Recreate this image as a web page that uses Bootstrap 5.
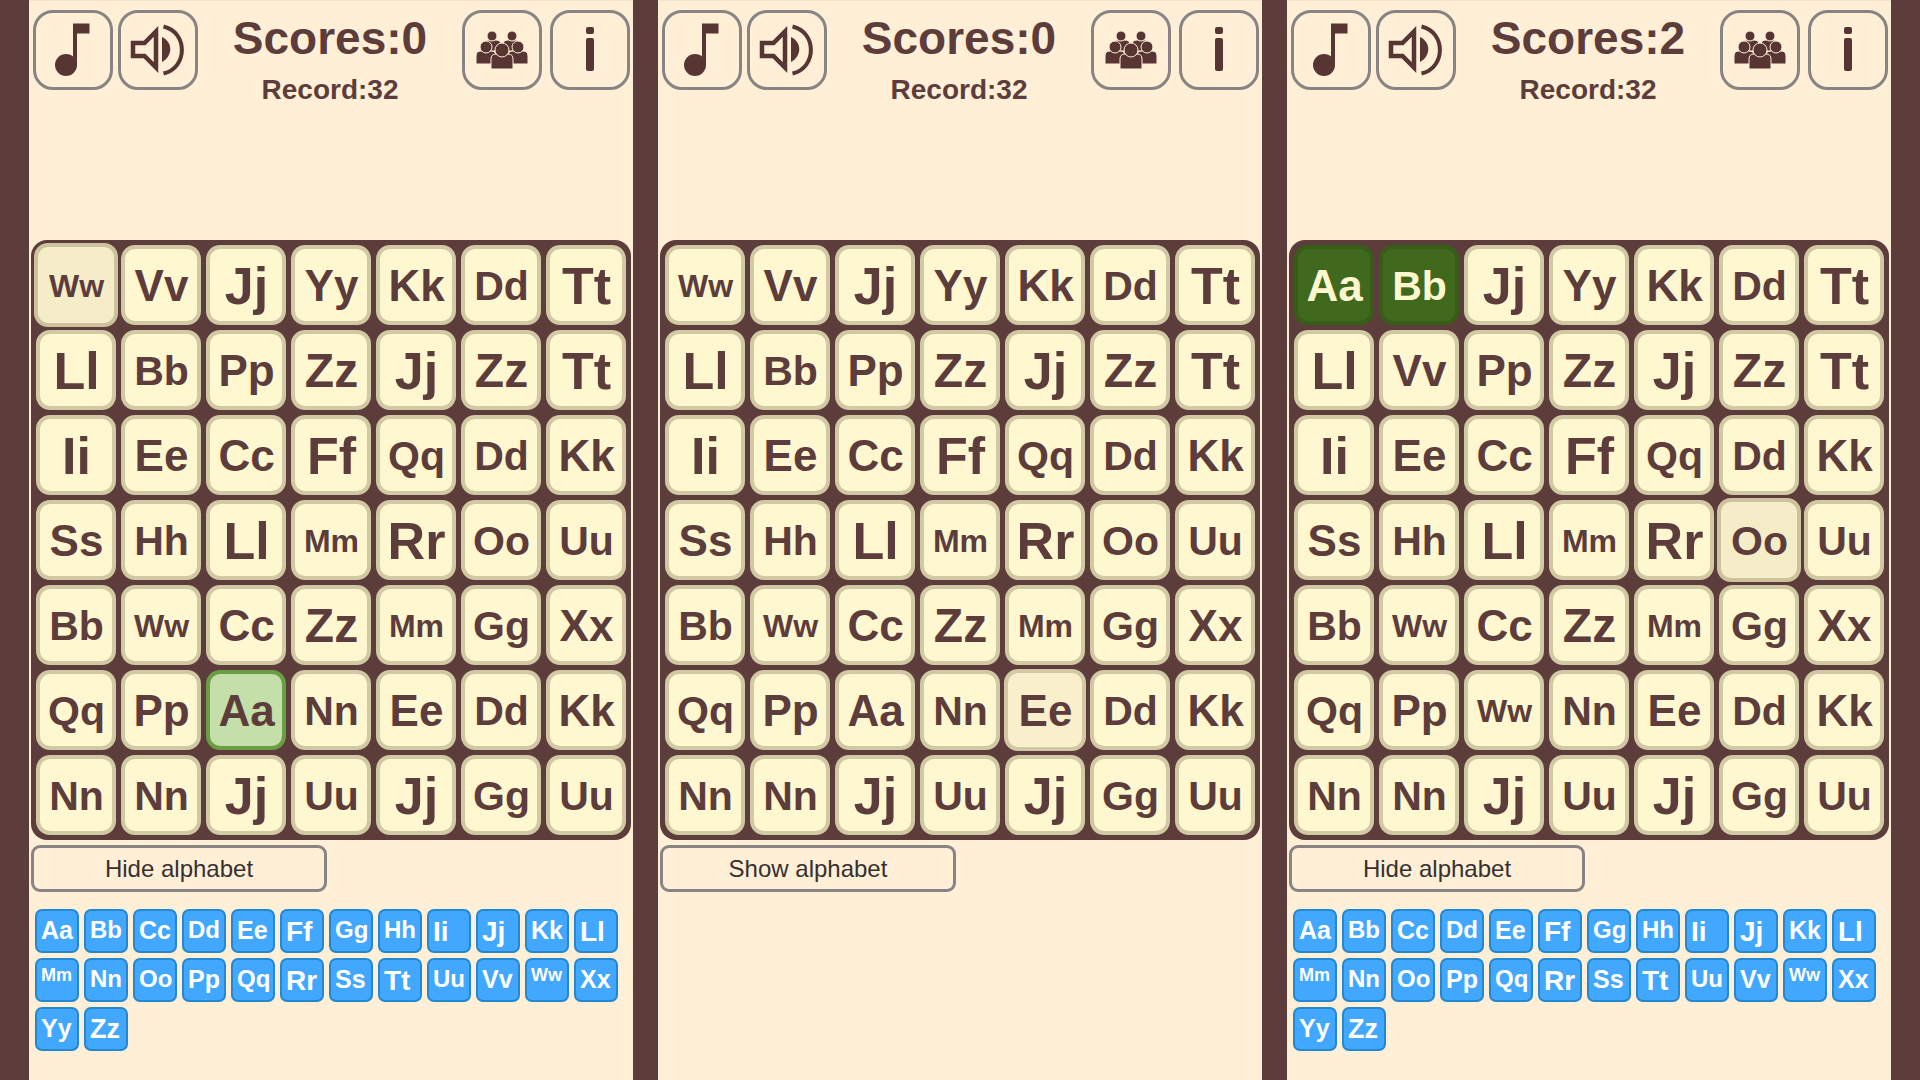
<!DOCTYPE html>
<html lang="en">
<head>
<meta charset="utf-8">
<meta name="viewport" content="width=device-width, initial-scale=1">
<title>Alphabet puzzle</title>
<link href="https://cdn.jsdelivr.net/npm/bootstrap@5.3.0/dist/css/bootstrap.min.css" rel="stylesheet">
<style>
body { background: #5d3d3b; color: #5d3d3b; font-family: "Liberation Sans", Arial, sans-serif; }
.games { padding: 0 29px; gap: 25px; }
.game { background: #ffefd6; border-top: 1px solid #f5e3cd; flex: 1 1 0; min-width: 0; }
.game-top { padding: 9px 3px 0 4px; height: 239px; }
.tool-group { gap: 5px; }
.tool-group-end { gap: 8px; }
.tool { width: 80px; height: 80px; border: 3px solid #888483; border-radius: 20px; background: transparent; color: #563532; padding: 0; }
.tool svg { display: block; width: 74px; height: 74px; }
.score-now { font-size: 46px; line-height: 56px; font-weight: 700; }
.score-best { font-size: 28px; line-height: 48px; font-weight: 700; }
.play-area { padding: 0 2px; }
.board { display: grid; grid-template-columns: repeat(7, minmax(0, 1fr)); grid-auto-rows: 80px; gap: 5px; padding: 5px; background: #5d3d3b; border-radius: 16px; }
.tile { border: 4px solid #d1c9a3; border-radius: 14px; background: #fef7d0; color: #5d3d3b; font-weight: 700; padding: 2px 0 0 1px; line-height: 1; white-space: nowrap; font-size: 44px; }
.tile.hovered { background: #f5ecc8; border-color: #ccc39c; margin: -2px; }
.tile.hovered-soft { background: #f9efcb; margin: -1px; }
.tile.picked { background: #c4dfa9; border-color: #6a9e43; }
.tile.solved { background: #40691d; border-color: #375d19; color: #fdf8d0; }
.tile.fit-xl { font-size: 52px; }
.tile.fit-l { font-size: 48px; }
.tile.fit-s { font-size: 41px; }
.tile.fit-xs { font-size: 32px; }
.alpha-toggle { width: 296px; height: 47px; margin-top: 5px; border: 3px solid #888483; border-radius: 9px; background: transparent; color: #353130; font-size: 24px; line-height: 1; padding: 0; }
.alpha { display: grid; grid-template-columns: repeat(12, 44px); grid-auto-rows: 44px; gap: 5px; margin: 17px 0 0 4px; padding: 0; list-style: none; }
.alpha li { border: 2px solid #2288cf; border-radius: 7px; background: #41a7ff; color: #fff; font-weight: 700; font-size: 25px; line-height: normal; padding: 5px 0 0 4px; white-space: nowrap; }
.alpha .fit-xl { font-size: 28px; }
.alpha .fit-l { font-size: 27px; }
.alpha .fit-s { font-size: 24px; }
.alpha .fit-xs { font-size: 18px; }
</style>
<script src="https://cdn.jsdelivr.net/npm/bootstrap@5.3.0/dist/js/bootstrap.bundle.min.js"></script>
</head>
<body>

<template id="game-template">
  <header class="game-top d-flex align-items-start">
    <div class="tool-group d-flex">
      <button type="button" class="tool" aria-label="Music">
        <svg viewBox="0 0 74 74" fill="currentColor" aria-hidden="true"><circle cx="30" cy="52" r="11"/><path d="M37 10.500H53.500V20.500H41V52H37Z"/></svg>
      </button>
      <button type="button" class="tool" aria-label="Sound">
        <svg viewBox="0 0 74 74" fill="none" stroke="currentColor" aria-hidden="true"><path d="M12 30H23.500L35 18.500V54.500L23.500 43H12Z" stroke-width="4.500"/><path d="M41 24C52 29 52 43 41 49Z" fill="currentColor" stroke="none"/><path d="M42.500 13.500C67 19 67 55 42.500 60.500" stroke-width="4"/></svg>
      </button>
    </div>
    <div class="flex-fill text-center">
      <div class="score-now">Scores:<span data-score></span></div>
      <div class="score-best">Record:32</div>
    </div>
    <div class="tool-group tool-group-end d-flex">
      <button type="button" class="tool" aria-label="Players">
        <svg viewBox="0 0 74 74" fill="currentColor" stroke="#ffefd6" stroke-width="1" aria-hidden="true">
          <path d="M18 38V33Q18 27 24 27H31Q36 27 36 32V38Z"/><circle cx="27" cy="23" r="5"/>
          <path d="M38 38V32Q38 27 43 27H50Q56 27 56 33V38Z"/><circle cx="47" cy="23" r="5"/>
          <path d="M11 51V43Q11 38 16 38H26Q31 38 31 43V51Z"/><circle cx="21" cy="34" r="6"/>
          <path d="M43 51V43Q43 38 48 38H58Q63 38 63 43V51Z"/><circle cx="53" cy="34" r="6"/>
          <path d="M26 56V46Q26 41 31 41H43Q48 41 48 46V56Z"/><circle cx="37" cy="37" r="7"/>
        </svg>
      </button>
      <button type="button" class="tool" aria-label="Information">
        <svg viewBox="0 0 74 74" fill="currentColor" aria-hidden="true"><rect x="33" y="14" width="8" height="7" rx="2"/><rect x="33" y="25" width="8" height="33" rx="2"/></svg>
      </button>
    </div>
  </header>
  <div class="play-area">
    <div class="board"></div>
    <button type="button" class="alpha-toggle d-block"></button>
    <ul class="alpha"></ul>
  </div>
</template>

<main class="games d-flex min-vh-100">
  <section class="game" data-score="0" data-open="true" data-marks="0:hovered,37:picked"
    data-rows="WVJYKDT LBPZJZT IECFQDK SHLMROU BWCZMGX QPANEDK NNJUJGU"></section>
  <section class="game" data-score="0" data-open="false" data-marks="39:hovered-soft"
    data-rows="WVJYKDT LBPZJZT IECFQDK SHLMROU BWCZMGX QPANEDK NNJUJGU"></section>
  <section class="game" data-score="2" data-open="true" data-marks="0:solved,1:solved,26:hovered"
    data-rows="ABJYKDT LVPZJZT IECFQDK SHLMROU BWCZMGX QPWNEDK NNJUJGU"></section>
</main>

<script>
// Narrow pairs get larger type and wide pairs smaller type, so each fills its tile.
function fitClass(letter) {
  if ('FIJLRT'.includes(letter)) return 'fit-xl';
  if (letter === 'Z') return 'fit-l';
  if ('BDGHNOQU'.includes(letter)) return 'fit-s';
  if ('MW'.includes(letter)) return 'fit-xs';
  return 'fit-m';
}
const template = document.getElementById('game-template');
document.querySelectorAll('.game').forEach(game => {
  game.append(template.content.cloneNode(true));
  game.querySelector('span[data-score]').textContent = game.dataset.score;
  const marks = Object.fromEntries(game.dataset.marks.split(',').map(m => m.split(':')));
  const board = game.querySelector('.board');
  [...game.dataset.rows.replace(/ /g, '')].forEach((letter, i) => {
    const tile = document.createElement('button');
    tile.type = 'button';
    tile.className = 'tile ' + fitClass(letter) + ' ' + (marks[i] || '');
    tile.textContent = letter + letter.toLowerCase();
    board.append(tile);
  });
  const open = game.dataset.open === 'true';
  game.querySelector('.alpha-toggle').textContent = open ? 'Hide alphabet' : 'Show alphabet';
  const list = game.querySelector('.alpha');
  if (!open) { list.remove(); return; }
  [...'ABCDEFGHIJKLMNOPQRSTUVWXYZ'].forEach(letter => {
    const item = document.createElement('li');
    item.className = fitClass(letter);
    item.textContent = letter + letter.toLowerCase();
    list.append(item);
  });
});
</script>
</body>
</html>
